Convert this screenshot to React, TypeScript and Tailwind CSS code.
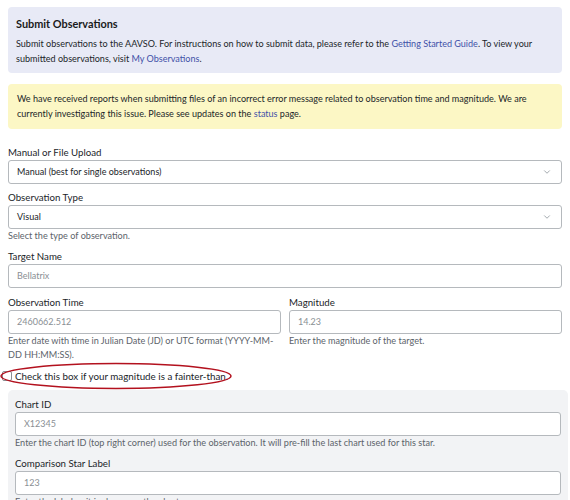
import React from 'react';
import { ChevronDown } from 'lucide-react';

const font = { fontFamily: 'Lato, "Liberation Sans", sans-serif' };

const Label: React.FC<{ children: React.ReactNode }> = ({ children }) => (
  <div className="text-[9.7px] leading-[14px] text-[#212529] mb-[1px]">{children}</div>
);

const Help: React.FC<{ children: React.ReactNode }> = ({ children }) => (
  <div className="text-[9.1px] leading-[14px] text-[#5c636a]">{children}</div>
);

const Input: React.FC<{ placeholder: string }> = ({ placeholder }) => (
  <div className="h-[24px] border border-[#b5b9bd] rounded-[3px] bg-white flex items-center px-[8px] text-[9px] text-[#8a8f94]">
    {placeholder}
  </div>
);

const Select: React.FC<{ value: string }> = ({ value }) => (
  <div className="h-[24px] border border-[#b5b9bd] rounded-[3px] bg-white flex items-center justify-between px-[8px] text-[9px] text-[#212529]">
    <span>{value}</span>
    <ChevronDown size={10} strokeWidth={1.5} className="text-[#6c757d] mr-[1px]" />
  </div>
);

export default function App() {
  return (
    <div className="w-[570px] h-[500px] overflow-hidden bg-white" style={font}>
      <div className="pt-[7px] px-[8px]">
        <div className="h-[66px] bg-[#e8eaf6] rounded-[4px] px-[8px] pt-[8px]">
          <h1 className="text-[10.9px] font-bold text-[#1a1a1a] leading-[18px] mb-[3px]">Submit Observations</h1>
          <p className="text-[9.05px] leading-[15px] text-[#212529]">
            Submit observations to the AAVSO. For instructions on how to submit data, please refer to the{' '}
            <span className="text-[#3f51a8]">Getting Started Guide</span>. To view your submitted observations, visit{' '}
            <span className="text-[#3f51a8]">My Observations</span>.
          </p>
        </div>

        <div className="mt-[11px] h-[45px] bg-[#fcf7c5] rounded-[4px] px-[9px] pt-[7px]">
          <p className="text-[9.05px] leading-[15px] text-[#212529]">
            We have received reports when submitting files of an incorrect error message related to observation time and magnitude. We are currently investigating this issue. Please see updates on the{' '}
            <span className="text-[#3f51a8]">status</span> page.
          </p>
        </div>

        <div className="mt-[16px]">
          <Label>Manual or File Upload</Label>
          <Select value="Manual (best for single observations)" />
        </div>

        <div className="mt-[6px]">
          <Label>Observation Type</Label>
          <Select value="Visual" />
          <Help>Select the type of observation.</Help>
        </div>

        <div className="mt-[6px]">
          <Label>Target Name</Label>
          <Input placeholder="Bellatrix" />
        </div>

        <div className="mt-[7px] grid grid-cols-2 gap-[8px]">
          <div>
            <Label>Observation Time</Label>
            <Input placeholder="2460662.512" />
            <Help>Enter date with time in Julian Date (JD) or UTC format (YYYY-MM-DD HH:MM:SS).</Help>
          </div>
          <div>
            <Label>Magnitude</Label>
            <Input placeholder="14.23" />
            <Help>Enter the magnitude of the target.</Help>
          </div>
        </div>
      </div>

      <div className="relative h-[28px] flex items-center pl-[2px]">
        <div className="w-[10px] h-[10px] border border-[#8a8f94] rounded-[2px] bg-white mr-[3px]" />
        <span className="text-[9.8px] text-[#212529]">Check this box if your magnitude is a fainter-than.</span>
        <svg className="absolute left-0 top-0" width="240" height="28" viewBox="0 0 240 28">
          <ellipse cx="116" cy="14" rx="115" ry="12.5" fill="none" stroke="#b3111e" strokeWidth="1.5" />
        </svg>
      </div>

      <div className="ml-[8px] mr-[2px] bg-[#f2f3f5] rounded-[5px] px-[7px] pt-[7px] pb-[10px]">
        <div>
          <Label>Chart ID</Label>
          <Input placeholder="X12345" />
          <Help>Enter the chart ID (top right corner) used for the observation. It will pre-fill the last chart used for this star.</Help>
        </div>
        <div className="mt-[6px]">
          <Label>Comparison Star Label</Label>
          <Input placeholder="123" />
          <Help>Enter the label as it is shown on the chart.</Help>
        </div>
      </div>
    </div>
  );
}
